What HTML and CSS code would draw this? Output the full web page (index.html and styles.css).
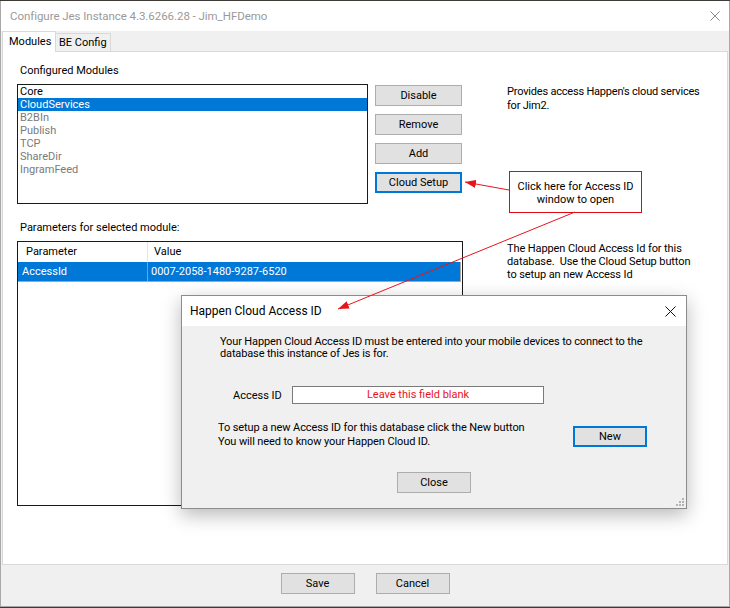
FILE: index.html
```html
<!DOCTYPE html>
<html>
<head>
<meta charset="utf-8">
<link rel="stylesheet" href="styles.css">
</head>
<body>
<div class="window">
  <div class="titlebar">
    <span class="title">Configure Jes Instance 4.3.6266.28 - Jim_HFDemo</span>
    <svg class="xbtn" width="10" height="10" viewBox="0 0 10 10"><path d="M0.5 0.5L9.5 9.5M9.5 0.5L0.5 9.5" stroke="#8a8a8a" stroke-width="1" fill="none"/></svg>
  </div>
  <div class="tabarea">
    <div class="tabstrip">
      <div class="tab active">Modules</div>
      <div class="tab">BE Config</div>
    </div>
    <div class="panel">
      <div class="label">Configured Modules</div>
      <div class="row1">
        <div class="listbox">
          <div class="item">Core</div>
          <div class="item sel">CloudServices</div>
          <div class="item dis">B2BIn</div>
          <div class="item dis">Publish</div>
          <div class="item dis">TCP</div>
          <div class="item dis">ShareDir</div>
          <div class="item dis">IngramFeed</div>
        </div>
        <div class="btncol">
          <div class="btn">Disable</div>
          <div class="btn">Remove</div>
          <div class="btn">Add</div>
          <div class="btn focus">Cloud Setup</div>
        </div>
        <div class="desc">Provides access Happen's cloud services<br>for Jim2.</div>
      </div>
      <div class="label label2">Parameters for selected module:</div>
      <div class="row2">
        <div class="listview">
          <div class="lvhead">
            <div class="c1">Parameter</div>
            <div class="c2">Value</div>
          </div>
          <div class="lvrow">
            <div class="c1">AccessId</div>
            <div class="c2">0007-2058-1480-9287-6520</div>
          </div>
        </div>
        <div class="desc desc2">The Happen Cloud Access Id for this<br>database.&nbsp; Use the Cloud Setup button<br>to setup an new Access Id</div>
      </div>
    </div>
  </div>
  <div class="footer">
    <div class="btn fbtn">Save</div>
    <div class="btn fbtn">Cancel</div>
  </div>
</div>

<div class="callout">Click here for Access ID<br>window to open</div>

<div class="dialog">
  <div class="dtitle">
    <span>Happen Cloud Access ID</span>
    <svg class="dx" width="11" height="11" viewBox="0 0 11 11"><path d="M0.5 0.5L10.5 10.5M10.5 0.5L0.5 10.5" stroke="#111" stroke-width="1" fill="none"/></svg>
  </div>
  <div class="dbody">
    <div class="dtext">Your Happen Cloud Access ID must be entered into your mobile devices to connect to the<br>database this instance of Jes is for.</div>
    <div class="accrow">
      <div class="acclabel">Access ID</div>
      <div class="accinput">Leave this field blank</div>
    </div>
    <div class="newrow">
      <div class="newtext">To setup a new Access ID for this database click the New button<br>You will need to know your Happen Cloud ID.</div>
      <div class="btn focus newbtn">New</div>
    </div>
    <div class="closerow"><div class="btn closebtn">Close</div></div>
  </div>
  <svg class="grip" width="8" height="8" viewBox="0 0 8 8">
    <rect x="6" y="0" width="2" height="2" fill="#b4b4b4"/>
    <rect x="3" y="3" width="2" height="2" fill="#b4b4b4"/>
    <rect x="6" y="3" width="2" height="2" fill="#b4b4b4"/>
    <rect x="0" y="6" width="2" height="2" fill="#b4b4b4"/>
    <rect x="3" y="6" width="2" height="2" fill="#b4b4b4"/>
    <rect x="6" y="6" width="2" height="2" fill="#b4b4b4"/>
  </svg>
</div>

<svg class="arrows" width="730" height="608" viewBox="0 0 730 608">
  <defs>
    <marker id="ah" markerUnits="userSpaceOnUse" markerWidth="11" markerHeight="8" refX="11" refY="4" orient="auto">
      <path d="M0 0 L11 4 L0 8 Z" fill="#e8141c"/>
    </marker>
  </defs>
  <line x1="509" y1="190" x2="465" y2="182" stroke="#e8141c" stroke-width="1" marker-end="url(#ah)"/>
  <line x1="575" y1="212" x2="338" y2="309" stroke="#e8141c" stroke-width="1" marker-end="url(#ah)"/>
</svg>
</body>
</html>
```
FILE: styles.css
```css
* { box-sizing: border-box; }
html, body { margin: 0; padding: 0; }
body {
  width: 730px;
  height: 608px;
  background: #3d3934;
  font-family: Roboto, "Liberation Sans", Arial, sans-serif;
  font-size: 11px;
  color: #000;
  position: relative;
  overflow: hidden;
}
.window {
  margin-top: 1px;
  width: 730px;
  height: 606px;
  background: #f0f0f0;
  border-left: 1px solid #a8a8a8;
  border-right: 1px solid #a8a8a8;
  border-bottom: 1px solid #a8a8a8;
  display: flex;
  flex-direction: column;
}
.titlebar {
  height: 30px;
  background: #fff;
  display: flex;
  align-items: center;
  padding-left: 9px;
  padding-right: 9px;
}
.title {
  flex: 1;
  font-size: 11.5px;
  letter-spacing: -0.05px;
  color: #9a9a9a;
}
.tabarea {
  padding: 0 1px;
  display: flex;
  flex-direction: column;
}
.tabstrip {
  height: 20px;
  display: flex;
  align-items: flex-end;
}
.tab {
  height: 18px;
  width: 55px;
  padding: 0 0 0 3px;
  white-space: nowrap;
  background: #f0f0f0;
  border: 1px solid #d9d9d9;
  border-left: none;
  border-bottom: none;
  font-size: 11px;
  line-height: 18px;
}
.tab.active {
  width: 54px;
  height: 21px;
  margin-bottom: -1px;
  position: relative;
  z-index: 1;
  background: #fff;
  border-left: 1px solid #d9d9d9;
  padding-left: 6px;
  line-height: 19px;
}
.panel {
  height: 514px;
  background: #fff;
  border: 1px solid #d9d9d9;
  padding: 12px 0 0 14px;
}
.label {
  line-height: 14px;
  height: 14px;
  padding-left: 3px;
}
.label2 { margin-top: 17px; }
.row1 {
  display: flex;
  margin-top: 6px;
}
.listbox {
  width: 351px;
  height: 120px;
  border: 1px solid #1a1a1a;
  background: #fff;
}
.item {
  height: 13px;
  line-height: 13px;
  padding-left: 2px;
}
.item.sel { background: #0078d7; color: #fff; }
.item.dis { color: #7a7a7a; }
.btncol {
  margin-left: 7px;
  display: flex;
  flex-direction: column;
  gap: 8px;
  padding-top: 1px;
}
.btn {
  width: 87px;
  height: 21px;
  background: #e1e1e1;
  border: 1px solid #adadad;
  text-align: center;
  line-height: 19px;
  font-size: 11px;
}
.btn.focus {
  border: 2px solid #0078d7;
  line-height: 17px;
}
.desc {
  margin-left: 45px;
  line-height: 14px;
  letter-spacing: -0.2px;
  padding-top: 1px;
}
.row2 {
  display: flex;
  margin-top: 6px;
}
.listview {
  width: 446px;
  height: 265px;
  border: 1px solid #1a1a1a;
  background: #fff;
}
.lvhead {
  display: flex;
  height: 20px;
  line-height: 20px;
}
.lvhead .c1 {
  width: 130px;
  padding-left: 8px;
  border-right: 1px solid #e5e5e5;
}
.lvhead .c2 { padding-left: 6px; }
.lvrow {
  display: flex;
  height: 20px;
  line-height: 19px;
  background: #0078d7;
  color: #fff;
  border-bottom: 1px solid #a6a6a6;
  border-right: 1px solid #a6a6a6;
  margin-right: 1px;
}
.lvrow .c1 {
  width: 130px;
  padding-left: 4px;
  border-right: 1px solid #6aa6dd;
}
.lvrow .c2 { padding-left: 3px; }
.desc2 {
  margin-left: 44px;
  line-height: 13px;
  letter-spacing: -0.1px;
}
.footer {
  height: 40px;
  display: flex;
  justify-content: center;
  gap: 21px;
  padding-top: 8px;
}
.fbtn { width: 74px; height: 21px; }

.callout {
  position: absolute;
  left: 509px;
  top: 171px;
  width: 133px;
  height: 42px;
  background: #fff;
  border: 1px solid #e30613;
  text-align: center;
  line-height: 13px;
  padding-top: 8px;
}
.dialog {
  position: absolute;
  left: 181px;
  top: 295px;
  width: 506px;
  height: 214px;
  border: 1px solid #8c8c8c;
  background: #f0f0f0;
  box-shadow: 0 6px 18px rgba(0,0,0,0.28);
  display: flex;
  flex-direction: column;
}
.dtitle {
  height: 30px;
  background: #fff;
  display: flex;
  align-items: center;
  padding-left: 8px;
  padding-right: 10px;
  font-size: 12px;
}
.dtitle span { flex: 1; }
.dbody {
  flex: 1;
  padding: 10px 0 0 36px;
}
.dtext {
  padding-left: 2px;
  line-height: 12px;
  letter-spacing: -0.14px;
}
.accrow {
  display: flex;
  align-items: center;
  margin-top: 26px;
  padding-left: 15px;
  height: 18px;
}
.acclabel { width: 59px; }
.accinput {
  width: 252px;
  height: 18px;
  background: #fff;
  border: 1px solid #7a7a7a;
  color: #e8141c;
  text-align: center;
  line-height: 16px;
}
.newrow {
  display: flex;
  margin-top: 17px;
}
.newtext {
  width: 355px;
  line-height: 14px;
  letter-spacing: -0.11px;
}
.newbtn {
  width: 74px;
  margin-top: 5px;
}
.closerow {
  display: flex;
  justify-content: center;
  margin-top: 23px;
  padding-right: 36px;
}
.closebtn { width: 74px; }
.grip {
  position: absolute;
  right: 2px;
  bottom: 2px;
}
.arrows {
  position: absolute;
  left: 0;
  top: 0;
  pointer-events: none;
}
```
